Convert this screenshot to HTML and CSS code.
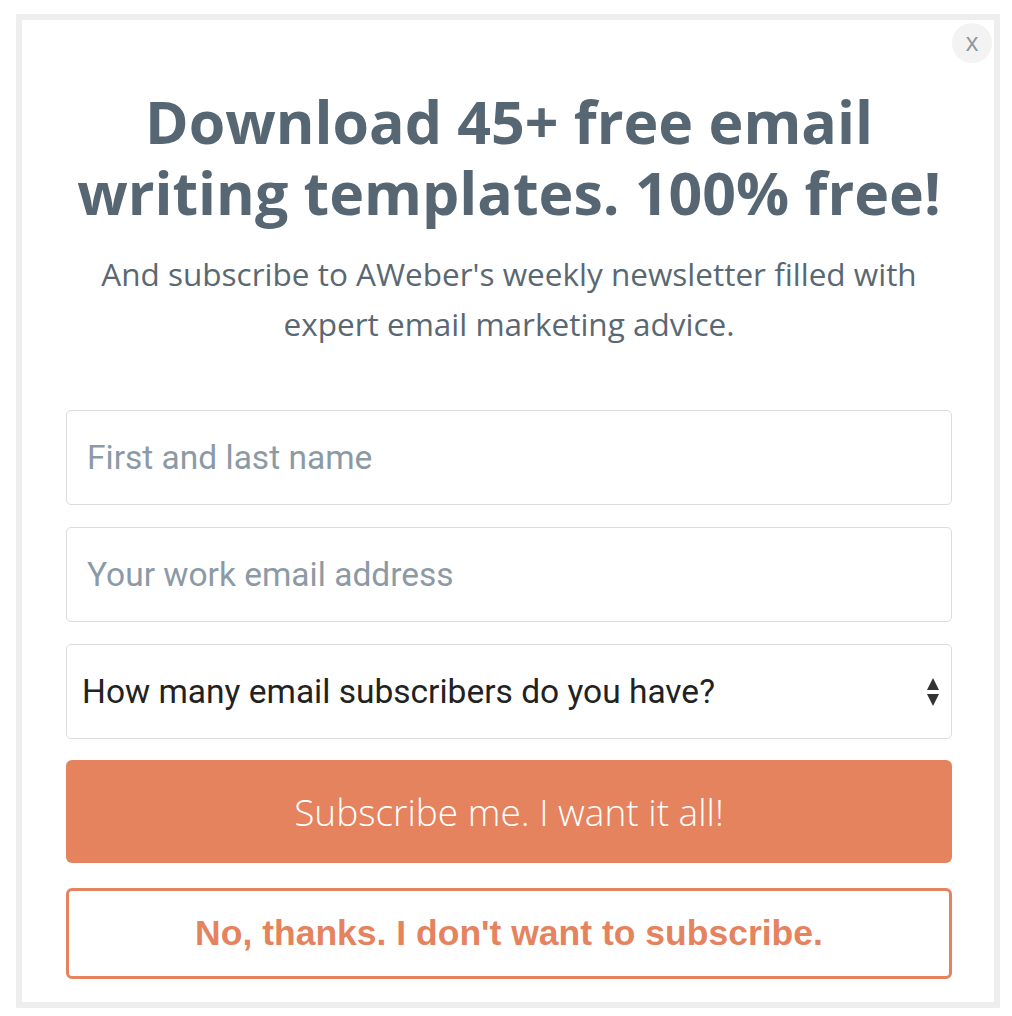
FILE: index.html
```html
<!DOCTYPE html>
<html lang="en">
	<head>
		<meta charset="UTF-8" />
		<meta name="viewport" content="width=device-width, initial-scale=1.0" />
		<title>AWeber templates</title>
		<link rel="stylesheet" href="styles.css">
	</head>
	<body>
		<div class="popup">
			<span class="close">x</span>
			<h1 class="title">Download 45+ free email<br />writing templates. 100% free!</h1>
			<p class="sub">And subscribe to AWeber's weekly newsletter filled with<br />expert email marketing advice.</p>
			<form class="form">
				<input class="field" type="text" placeholder="First and last name" />
				<input class="field" type="email" placeholder="Your work email address" />
				<div class="select">
					<span>How many email subscribers do you have?</span>
					<svg class="arrows" width="14" height="30" viewBox="0 0 14 30">
						<path d="M7 1 L13 13 L1 13 Z" fill="#333" />
						<path d="M1 17 L13 17 L7 29 Z" fill="#333" />
					</svg>
				</div>
				<button class="btn" type="button">Subscribe me. I want it all!</button>
				<button class="no" type="button">No, thanks. I don't want to subscribe.</button>
			</form>
		</div>
	</body>
</html>
```

FILE: styles.css
```css
body {
	margin: 14px 0 0 16px;
	background: #fff;
}
.popup {
	width: 984px;
	height: 994px;
	box-sizing: border-box;
	border: 6px solid #eeeeee;
	background: #fff;
	position: relative;
	padding: 66px 42px 0 44px;
}
.close {
	position: absolute;
	top: 3px;
	right: 2px;
	width: 40px;
	height: 40px;
	border-radius: 50%;
	background: #f3f3f3;
	color: #8c96a0;
	font: 25px/37px "Open Sans", sans-serif;
	text-align: center;
}
.title {
	margin: 0 -1px 0 -1px;
	font: bold 59px/71px "Open Sans", sans-serif;
	color: #566773;
	text-align: center;
}
.sub {
	margin: 21px 0 0;
	font: 31.5px/50px "Open Sans", sans-serif;
	color: #5a6873;
	text-align: center;
}
.form {
	margin-top: 61px;
	display: flex;
	flex-direction: column;
}
.field,
.select {
	height: 95px;
	box-sizing: border-box;
	border: 1px solid #dcdcdc;
	border-radius: 5px;
	background: #fff;
	margin-bottom: 22px;
}
.field {
	padding: 0 20px;
	font: 33.5px "Roboto", sans-serif;
	color: #222;
	outline: none;
}
.field::placeholder {
	color: #8c9aa6;
}
.select {
	display: flex;
	align-items: center;
	justify-content: space-between;
	padding: 0 11px 0 15px;
	font: 33.5px "Roboto", sans-serif;
	color: #222;
	margin-bottom: 21px;
}
.btn {
	height: 103px;
	border: 0;
	border-radius: 6px;
	background: #e5835f;
	color: #fff;
	font: 300 37px "Open Sans", sans-serif;
	margin-bottom: 25px;
}
.no {
	height: 91px;
	border: 3px solid #e5835f;
	border-radius: 6px;
	background: #fff;
	color: #e5835f;
	font: bold 35.5px "Liberation Sans", Arial, sans-serif;
}
```
